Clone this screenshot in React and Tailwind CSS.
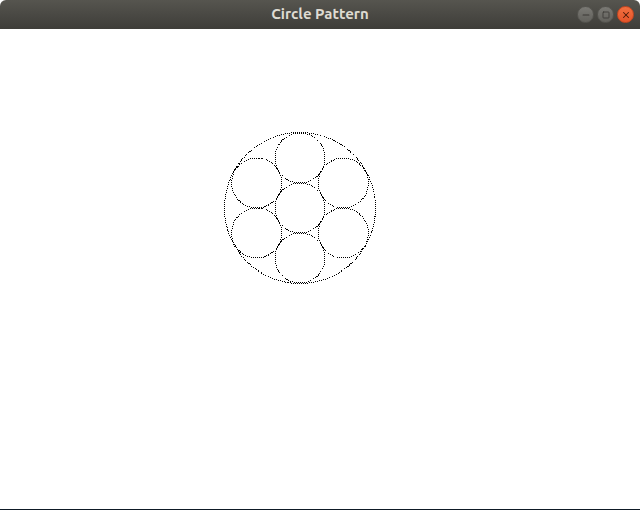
import { Minus, Square, X } from "lucide-react";

const cx = 300;
const cy = 208;
const r = 25;
const small = [
 [cx, cy],
 [cx, cy - 50],
 [cx, cy + 50],
 [cx - 43.3, cy - 25],
 [cx + 43.3, cy - 25],
 [cx - 43.3, cy + 25],
 [cx + 43.3, cy + 25],
];

function TitleButton({ children, close }) {
 return (
 <div
 className={`flex h-[17px] w-[17px] items-center justify-center rounded-full border ${
 close
 ? "border-[#c9461f] bg-gradient-to-b from-[#f26f3f] to-[#e4542a] text-[#4a1a0a]"
 : "border-[#55544f] bg-gradient-to-b from-[#7a7974] to-[#62615c] text-[#3a3935]"
 }`}
 >
 {children}
 </div>
 );
}

export default function App() {
 return (
 <div className="flex h-[510px] w-[640px] flex-col bg-white font-['Ubuntu','Open_Sans',sans-serif]">
 <div className="relative flex h-[29px] shrink-0 items-center justify-center rounded-t-[6px] bg-gradient-to-b from-[#56554f] to-[#3e3d39]">
 <span className="text-[15px] font-bold text-[#dfdbd2]">Circle Pattern</span>
 <div className="absolute right-[6px] top-[6px] flex gap-[3px]">
 <TitleButton>
 <Minus className="h-[10px] w-[10px]" strokeWidth={2.5} />
 </TitleButton>
 <TitleButton>
 <Square className="h-[8px] w-[8px]" strokeWidth={2.5} />
 </TitleButton>
 <TitleButton close>
 <X className="h-[10px] w-[10px]" strokeWidth={2.5} />
 </TitleButton>
 </div>
 </div>
 <div className="relative flex-1">
 <svg
 width="640"
 height="480"
 viewBox="0 29 640 480"
 className="block"
 shapeRendering="crispEdges"
 >
 <circle cx={cx} cy={cy} r={75.5} fill="none" stroke="#000" strokeWidth="1" strokeDasharray="1 1" />
 {small.map(([x, y], i) => (
 <circle key={i} cx={x} cy={y} r={r} fill="none" stroke="#000" strokeWidth="1" strokeDasharray="1 1" />
 ))}
 </svg>
 </div>
 <div className="h-px shrink-0 bg-[#0e1a26]" />
 </div>
 );
}
